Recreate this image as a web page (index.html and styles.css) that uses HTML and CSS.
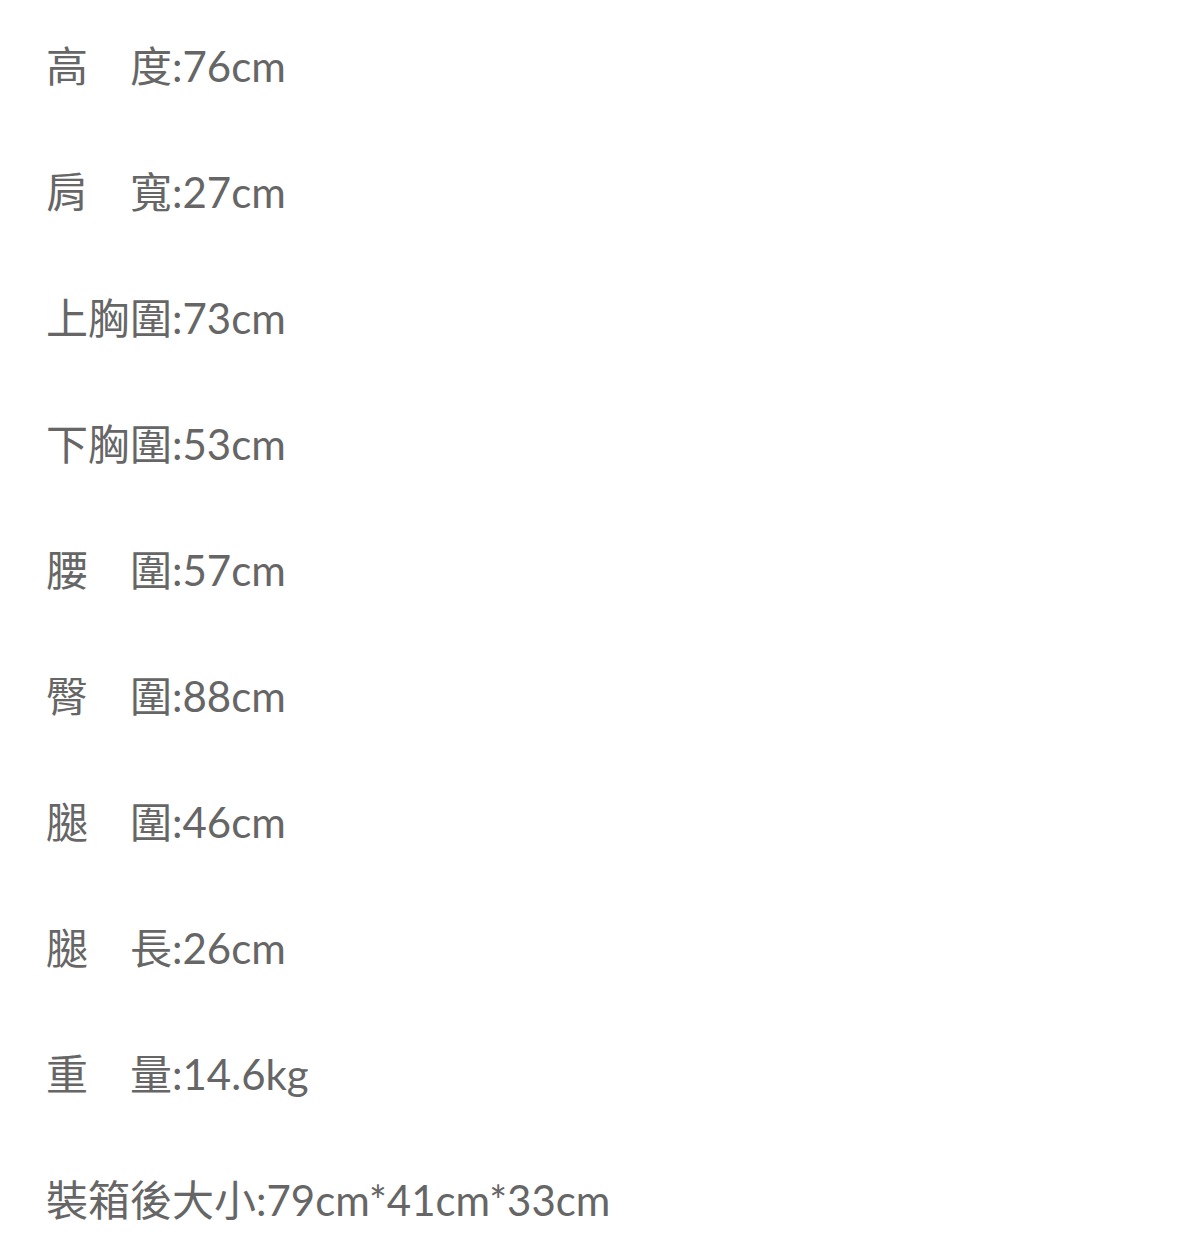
FILE: index.html
```html
<!DOCTYPE html>
<html lang="zh-Hant">
<head>
    <meta charset="UTF-8">
    <meta name="viewport" content="width=device-width, initial-scale=1.0">
    <title>商品規格</title>
    <link rel="stylesheet" href="styles.css">
</head>
<body>
    <div class="specs">
        <p class="spec">高　度:76cm</p>
        <p class="spec">肩　寬:27cm</p>
        <p class="spec">上胸圍:73cm</p>
        <p class="spec">下胸圍:53cm</p>
        <p class="spec">腰　圍:57cm</p>
        <p class="spec">臀　圍:88cm</p>
        <p class="spec">腿　圍:46cm</p>
        <p class="spec">腿　長:26cm</p>
        <p class="spec">重　量:14.6kg</p>
        <p class="spec">裝箱後大小:79cm*41cm*33cm</p>
    </div>
</body>
</html>
```

FILE: styles.css
```css
* {
    margin: 0;
    padding: 0;
    box-sizing: border-box;
}

body {
    font-family: 'Lato', 'Noto Sans CJK TC', sans-serif;
    background-color: #fff;
    color: #666;
}

.specs {
    padding: 3px 0 0 46px;
}

.spec {
    font-size: 42px;
    line-height: 126px;
    white-space: nowrap;
}
```
